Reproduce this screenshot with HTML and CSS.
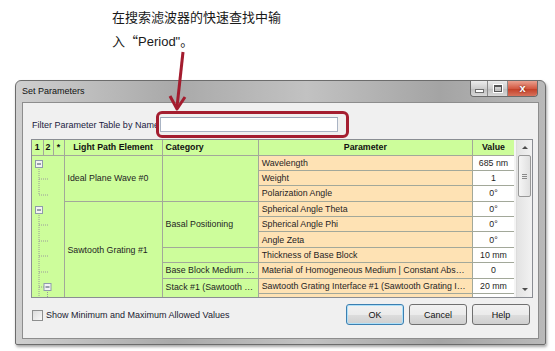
FILE: index.html
```html
<!DOCTYPE html>
<html lang="zh">
<head>
  <meta charset="UTF-8">
  <title>Set Parameters</title>
  <link rel="stylesheet" href="styles.css">
</head>
<body>
<div class="page">

  <p class="note">在搜索滤波器的快速查找中输<br>入<span class="cjk">“</span>Period"。</p>

  <svg class="arrow" width="555" height="120" viewBox="0 0 555 120">
    <line x1="183" y1="52" x2="177" y2="107" />
    <polyline points="170,96 177,109 185,97" />
  </svg>

  <div class="window">
    <div class="titlebar">
      <span class="title">Set Parameters</span>
      <div class="caption-btns">
        <span class="cap cap-min"><i></i></span>
        <span class="cap cap-max"><i></i></span>
        <span class="cap cap-close">x</span>
      </div>
    </div>

    <div class="client">
      <div class="filter-row">
        <label class="filter-label" for="filter">Filter Parameter Table by Name</label>
        <input id="filter" class="filter-input" type="text">
        <span class="highlight"></span>
      </div>

      <div class="grid-frame">
        <div class="grid-view">
          <table class="grid">
            <colgroup>
              <col style="width:11px"><col style="width:10px"><col style="width:11px">
              <col style="width:98px"><col style="width:96px"><col style="width:214px"><col style="width:42px">
            </colgroup>
            <tr class="head">
              <th>1</th><th>2</th><th>*</th>
              <th>Light Path Element</th>
              <th class="left">Category</th>
              <th>Parameter</th>
              <th>Value</th>
            </tr>
            <tr>
              <td class="tree" rowspan="10" colspan="3">
                <svg width="32" height="144" viewBox="0 0 32 144">
                  <g class="dots">
                    <line x1="7" y1="11" x2="7" y2="39" />
                    <line x1="7" y1="23" x2="17" y2="23" />
                    <line x1="7" y1="39" x2="17" y2="39" />
                    <line x1="7" y1="57" x2="7" y2="144" />
                    <line x1="7" y1="69" x2="17" y2="69" />
                    <line x1="7" y1="85" x2="17" y2="85" />
                    <line x1="7" y1="100" x2="17" y2="100" />
                    <line x1="7" y1="116" x2="17" y2="116" />
                    <line x1="7" y1="131" x2="12" y2="131" />
                    <line x1="15.5" y1="134" x2="15.5" y2="144" />
                  </g>
                  <g class="expander">
                    <rect x="3.5" y="4.5" width="7" height="7" />
                    <line x1="5" y1="8" x2="9" y2="8" />
                    <rect x="3.5" y="50.5" width="7" height="7" />
                    <line x1="5" y1="54" x2="9" y2="54" />
                    <rect x="12" y="127.5" width="7" height="7" />
                    <line x1="13.5" y1="131" x2="17.5" y2="131" />
                  </g>
                </svg>
              </td>
              <td class="lpe" rowspan="3">Ideal Plane Wave #0</td>
              <td class="cat" rowspan="3"></td>
              <td class="param">Wavelength</td>
              <td class="val">685 nm</td>
            </tr>
            <tr><td class="param">Weight</td><td class="val">1</td></tr>
            <tr><td class="param">Polarization Angle</td><td class="val">0°</td></tr>
            <tr>
              <td class="lpe lpe-long" rowspan="7">Sawtooth Grating #1</td>
              <td class="cat" rowspan="3">Basal Positioning</td>
              <td class="param">Spherical Angle Theta</td>
              <td class="val">0°</td>
            </tr>
            <tr><td class="param">Spherical Angle Phi</td><td class="val">0°</td></tr>
            <tr><td class="param">Angle Zeta</td><td class="val">0°</td></tr>
            <tr><td class="cat"></td><td class="param">Thickness of Base Block</td><td class="val">10 mm</td></tr>
            <tr><td class="cat">Base Block Medium (Homogeneous Medium)</td><td class="param">Material of Homogeneous Medium | Constant Absorption</td><td class="val">0</td></tr>
            <tr>
              <td class="cat cat-top" rowspan="2">Stack #1 (Sawtooth Grating Interface)</td>
              <td class="param">Sawtooth Grating Interface #1 (Sawtooth Grating Interface)</td>
              <td class="val">20 mm</td>
            </tr>
            <tr><td class="param">Grating Period | Sawtooth Grating Interface #1 (Sawtooth)</td><td class="val">20 µm</td></tr>
          </table>
        </div>
        <div class="vscroll">
          <span class="sb-btn"><i class="up"></i></span>
          <span class="sb-track"><span class="sb-thumb"><i></i></span></span>
          <span class="sb-btn"><i class="down"></i></span>
        </div>
      </div>

      <div class="bottom-row">
        <label class="check"><span class="box"></span>Show Minimum and Maximum Allowed Values</label>
        <div class="buttons">
          <button class="btn btn-default">OK</button>
          <button class="btn">Cancel</button>
          <button class="btn">Help</button>
        </div>
      </div>
    </div>
  </div>

</div>
</body>
</html>
```

FILE: styles.css
```css
:root {
  --green: #cdfd9b;
  --orange: #fee2b4;
  --line: #a2a89a;
  --text: #1e1e24;
  --ui: "Liberation Sans", Arial, sans-serif;
}

body {
  margin: 0;
  background: #fff;
  font-family: var(--ui);
  color: var(--text);
}

.page {
  position: relative;
  width: 555px;
  height: 351px;
  overflow: hidden;
}

/* note above the dialog */
.note {
  margin: 0;
  height: 80px;
  box-sizing: border-box;
  padding: 6px 0 0 112px;
  font-family: "Liberation Sans", "Noto Sans CJK SC", sans-serif;
  font-size: 13px;
  line-height: 23px;
  color: #1a1a1a;
}

.note .cjk {
  font-family: "Noto Sans CJK SC", sans-serif;
}

.arrow {
  position: absolute;
  left: 0;
  top: 0;
  pointer-events: none;
  z-index: 3;
}

.arrow line,
.arrow polyline {
  fill: none;
  stroke: #a31c2e;
  stroke-width: 3;
  stroke-linejoin: round;
}

/* window frame */
.window {
  margin-left: 15px;
  width: 531px;
  height: 265px;
  box-sizing: border-box;
  border: 1px solid #6c6c6c;
  border-radius: 6px 6px 2px 2px;
  background: linear-gradient(to right, #cfcfcf, #a9a9a9 30%, #c2c2c2 55%, #a4a4a4 80%, #b9b9b9);
  padding: 0 6px 5px;
  box-shadow: 1px 2px 3px rgba(0, 0, 0, 0.35);
}

.titlebar {
  display: flex;
  height: 21px;
}

.title {
  font-size: 9px;
  line-height: 21px;
  color: #111;
}

.caption-btns {
  display: flex;
  margin-left: auto;
  margin-right: 1px;
  height: 15px;
  border: 1px solid #6a6a6a;
  border-top: 0;
  border-radius: 0 0 4px 4px;
  overflow: hidden;
}

.cap {
  display: flex;
  align-items: center;
  justify-content: center;
  height: 15px;
  background: linear-gradient(#ececec, #cdcdcd 50%, #bdbdbd 51%, #d8d8d8);
  border-right: 1px solid #8a8a8a;
}

.cap-min { width: 16px; }
.cap-max { width: 19px; }

.cap-min i {
  width: 7px;
  height: 2px;
  margin-top: 5px;
  background: #fff;
  border: 1px solid #6e6e6e;
}

.cap-max i {
  width: 6px;
  height: 4px;
  border: 1px solid #555;
  border-top-width: 2px;
  box-shadow: 0 0 0 1px #fff;
}

.cap-close {
  width: 29px;
  border-right: 0;
  background: linear-gradient(#eaa08f, #d35a43 50%, #c23d25 51%, #d7725c);
  color: #fff;
  font-size: 11px;
  font-weight: bold;
  text-shadow: 0 0 2px #5a1208;
  line-height: 15px;
}

/* client area */
.client {
  height: 237px;
  box-sizing: border-box;
  background: #f0f0f0;
  border: 1px solid #8d8d8d;
}

.filter-row {
  position: relative;
  display: flex;
  align-items: center;
  padding: 14px 0 0 9px;
}

.filter-label {
  width: 128px;
  overflow: hidden;
  white-space: nowrap;
  font-size: 9px;
  color: #202040;
}

.filter-input {
  width: 178px;
  height: 15px;
  box-sizing: border-box;
  margin: 0;
  padding: 0;
  border: 1px solid #aab4c4;
  border-top-color: #9aa6b8;
  background: #fff;
}

.highlight {
  position: absolute;
  left: 133px;
  top: 8px;
  width: 193px;
  height: 27px;
  box-sizing: border-box;
  border: 3px solid #a41e30;
  border-radius: 6px;
}

/* parameter table */
.grid-frame {
  display: flex;
  margin: 7px 0 0 8px;
  width: 502px;
  height: 159px;
  box-sizing: border-box;
  border: 1px solid #8a8d93;
  background: #f4f4f4;
}

.grid-view {
  width: 483px;
  height: 157px;
  overflow: hidden;
}

.grid {
  width: 483px;
  table-layout: fixed;
  border-collapse: collapse;
  font-size: 8.8px;
}

.grid tr {
  height: 15.4px;
}

.grid tr.head {
  height: 15px;
}

.grid th,
.grid td {
  border: 1px solid var(--line);
  padding: 0 3px;
  line-height: 10px;
  white-space: nowrap;
  overflow: hidden;
  text-overflow: ellipsis;
  background: var(--green);
}

.grid th {
  border-top: 0;
  font-weight: bold;
  text-align: center;
  padding: 0;
  color: #111;
}

.grid th:first-child,
.grid td.tree {
  border-left: 0;
}

.grid th.left {
  text-align: left;
  padding-left: 3px;
}

.grid td.tree {
  padding: 0;
  vertical-align: top;
}

.tree svg {
  display: block;
}

.tree .dots line {
  stroke: #9a9a9a;
  stroke-width: 1;
  stroke-dasharray: 1 1;
}

.tree .expander rect {
  fill: #f3f3f3;
  stroke: #8f9bab;
}

.tree .expander line {
  stroke: #3c4e63;
  stroke-width: 1;
}

.grid td.lpe-long {
  padding-bottom: 10px;
}

.grid td.cat-top {
  vertical-align: top;
  padding-top: 3px;
}

.grid td.param {
  background: var(--orange);
}

.grid td.val {
  background: #fff;
  text-align: center;
}

/* scrollbar */
.vscroll {
  display: flex;
  flex-direction: column;
  width: 15px;
  margin-left: 2px;
  background: linear-gradient(to right, #e3e3e3, #f2f2f2);
  border-left: 1px solid #dcdcdc;
}

.sb-btn {
  display: flex;
  align-items: center;
  justify-content: center;
  height: 15px;
}

.sb-btn i {
  width: 0;
  height: 0;
  border-left: 3px solid transparent;
  border-right: 3px solid transparent;
}

.sb-btn .up { border-bottom: 3px solid #4d4d4d; }
.sb-btn .down { border-top: 3px solid #4d4d4d; }

.sb-track {
  flex: 1;
  padding: 0 1px;
}

.sb-thumb {
  display: flex;
  align-items: center;
  justify-content: center;
  height: 42px;
  box-sizing: border-box;
  border: 1px solid #989898;
  border-radius: 2px;
  background: linear-gradient(to right, #f5f5f5, #e0e0e0);
}

.sb-thumb i {
  width: 5px;
  height: 5px;
  background: repeating-linear-gradient(#8a8a8a 0 1px, transparent 1px 2px);
}

/* bottom row */
.bottom-row {
  display: flex;
  align-items: center;
  justify-content: space-between;
  margin: 6px 8px 0 9px;
}

.check {
  display: flex;
  align-items: center;
  gap: 3px;
  font-size: 9px;
  color: #202030;
  margin-top: 1px;
}

.check .box {
  width: 9px;
  height: 9px;
  border: 1px solid #8e8f8f;
  background: linear-gradient(135deg, #dcdcdc, #f8f8f8);
}

.buttons {
  display: flex;
  gap: 5px;
}

.btn {
  width: 58px;
  height: 21px;
  padding: 0;
  font-family: var(--ui);
  font-size: 9px;
  color: #111;
  border: 1px solid #707070;
  border-radius: 3px;
  background: linear-gradient(#f2f2f2, #ebebeb 50%, #dddddd 51%, #cfcfcf);
}

.btn-default {
  border-color: #3c7fb1;
  box-shadow: inset 0 0 0 1px #aee0f8;
}
```
